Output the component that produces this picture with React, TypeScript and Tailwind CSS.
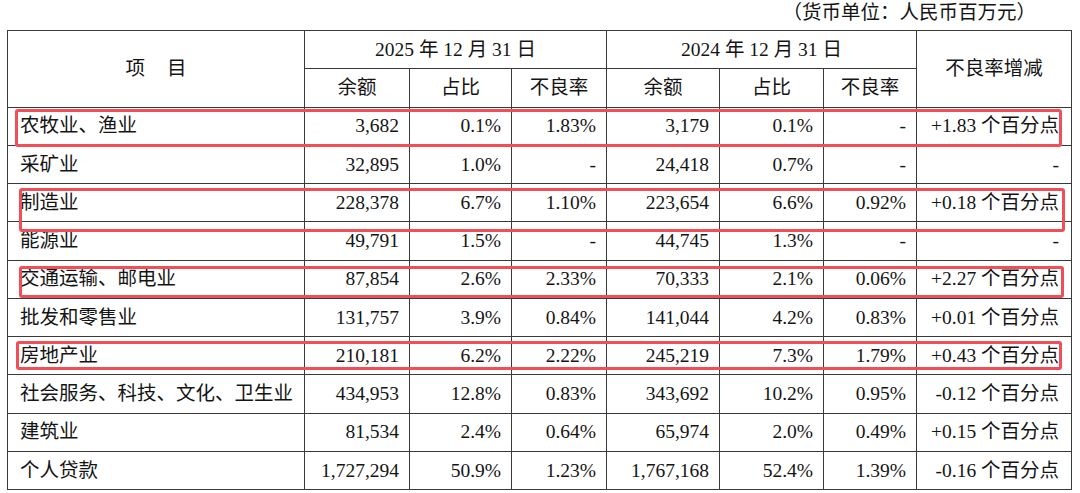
const rows: string[][] = [
  ['农牧业、渔业', '3,682', '0.1%', '1.83%', '3,179', '0.1%', '-', '+1.83 个百分点'],
  ['采矿业', '32,895', '1.0%', '-', '24,418', '0.7%', '-', '-'],
  ['制造业', '228,378', '6.7%', '1.10%', '223,654', '6.6%', '0.92%', '+0.18 个百分点'],
  ['能源业', '49,791', '1.5%', '-', '44,745', '1.3%', '-', '-'],
  ['交通运输、邮电业', '87,854', '2.6%', '2.33%', '70,333', '2.1%', '0.06%', '+2.27 个百分点'],
  ['批发和零售业', '131,757', '3.9%', '0.84%', '141,044', '4.2%', '0.83%', '+0.01 个百分点'],
  ['房地产业', '210,181', '6.2%', '2.22%', '245,219', '7.3%', '1.79%', '+0.43 个百分点'],
  ['社会服务、科技、文化、卫生业', '434,953', '12.8%', '0.83%', '343,692', '10.2%', '0.95%', '-0.12 个百分点'],
  ['建筑业', '81,534', '2.4%', '0.64%', '65,974', '2.0%', '0.49%', '+0.15 个百分点'],
  ['个人贷款', '1,727,294', '50.9%', '1.23%', '1,767,168', '52.4%', '1.39%', '-0.16 个百分点'],
]

const widths = [297, 105, 102, 95, 113, 104, 93, 155]

// red highlight boxes drawn over the table
const marks = [
  { left: 8, top: 79, width: 1047, height: 38 },
  { left: 12, top: 158, width: 1046, height: 44 },
  { left: 12, top: 236, width: 1045, height: 32 },
  { left: 9, top: 311, width: 1046, height: 29 },
]

const cell = 'border border-[#3a3a3a] h-[38.25px] p-0 align-middle'

export default function App() {
  return (
    <div
      className="w-[1080px] h-[493px] overflow-hidden bg-white text-[#141414] text-[19.5px] leading-none"
      style={{ fontFamily: '"Liberation Serif", "Noto Sans CJK SC", serif' }}
    >
      <div className="h-[30px] flex items-center justify-end pr-[44px] pb-[4px]">（货币单位：人民币百万元）</div>
      <div className="relative ml-[7px] w-[1065px]">
        <table className="table-fixed border-collapse w-[1065px]">
          <colgroup>
            {widths.map((w, i) => (
              <col key={i} style={{ width: w }} />
            ))}
          </colgroup>
          <thead>
            <tr>
              <th rowSpan={2} className={`${cell} font-normal text-center`}>
                项<span className="inline-block w-[22px]" />目
              </th>
              <th colSpan={3} className={`${cell} font-normal text-center`}>
                2025 年 12 月 31 日
              </th>
              <th colSpan={3} className={`${cell} font-normal text-center`}>
                2024 年 12 月 31 日
              </th>
              <th rowSpan={2} className={`${cell} font-normal text-center`}>
                不良率增减
              </th>
            </tr>
            <tr>
              {['余额', '占比', '不良率', '余额', '占比', '不良率'].map((h, i) => (
                <th key={i} className={`${cell} font-normal text-center`}>
                  {h}
                </th>
              ))}
            </tr>
          </thead>
          <tbody>
            {rows.map((r, ri) => (
              <tr key={ri}>
                {r.map((v, ci) => (
                  <td
                    key={ci}
                    className={`${cell} whitespace-nowrap ${
                      ci === 0 ? 'text-left pl-[12px]' : ci === 7 ? 'text-right pr-[12px]' : 'text-right pr-[10px]'
                    }`}
                  >
                    {v}
                  </td>
                ))}
              </tr>
            ))}
          </tbody>
        </table>
        {marks.map((m, i) => (
          <div
            key={i}
            className="absolute border-[3px] border-[#f04f57] rounded-[3px] pointer-events-none"
            style={{ left: m.left, top: m.top, width: m.width, height: m.height }}
          />
        ))}
      </div>
    </div>
  )
}
